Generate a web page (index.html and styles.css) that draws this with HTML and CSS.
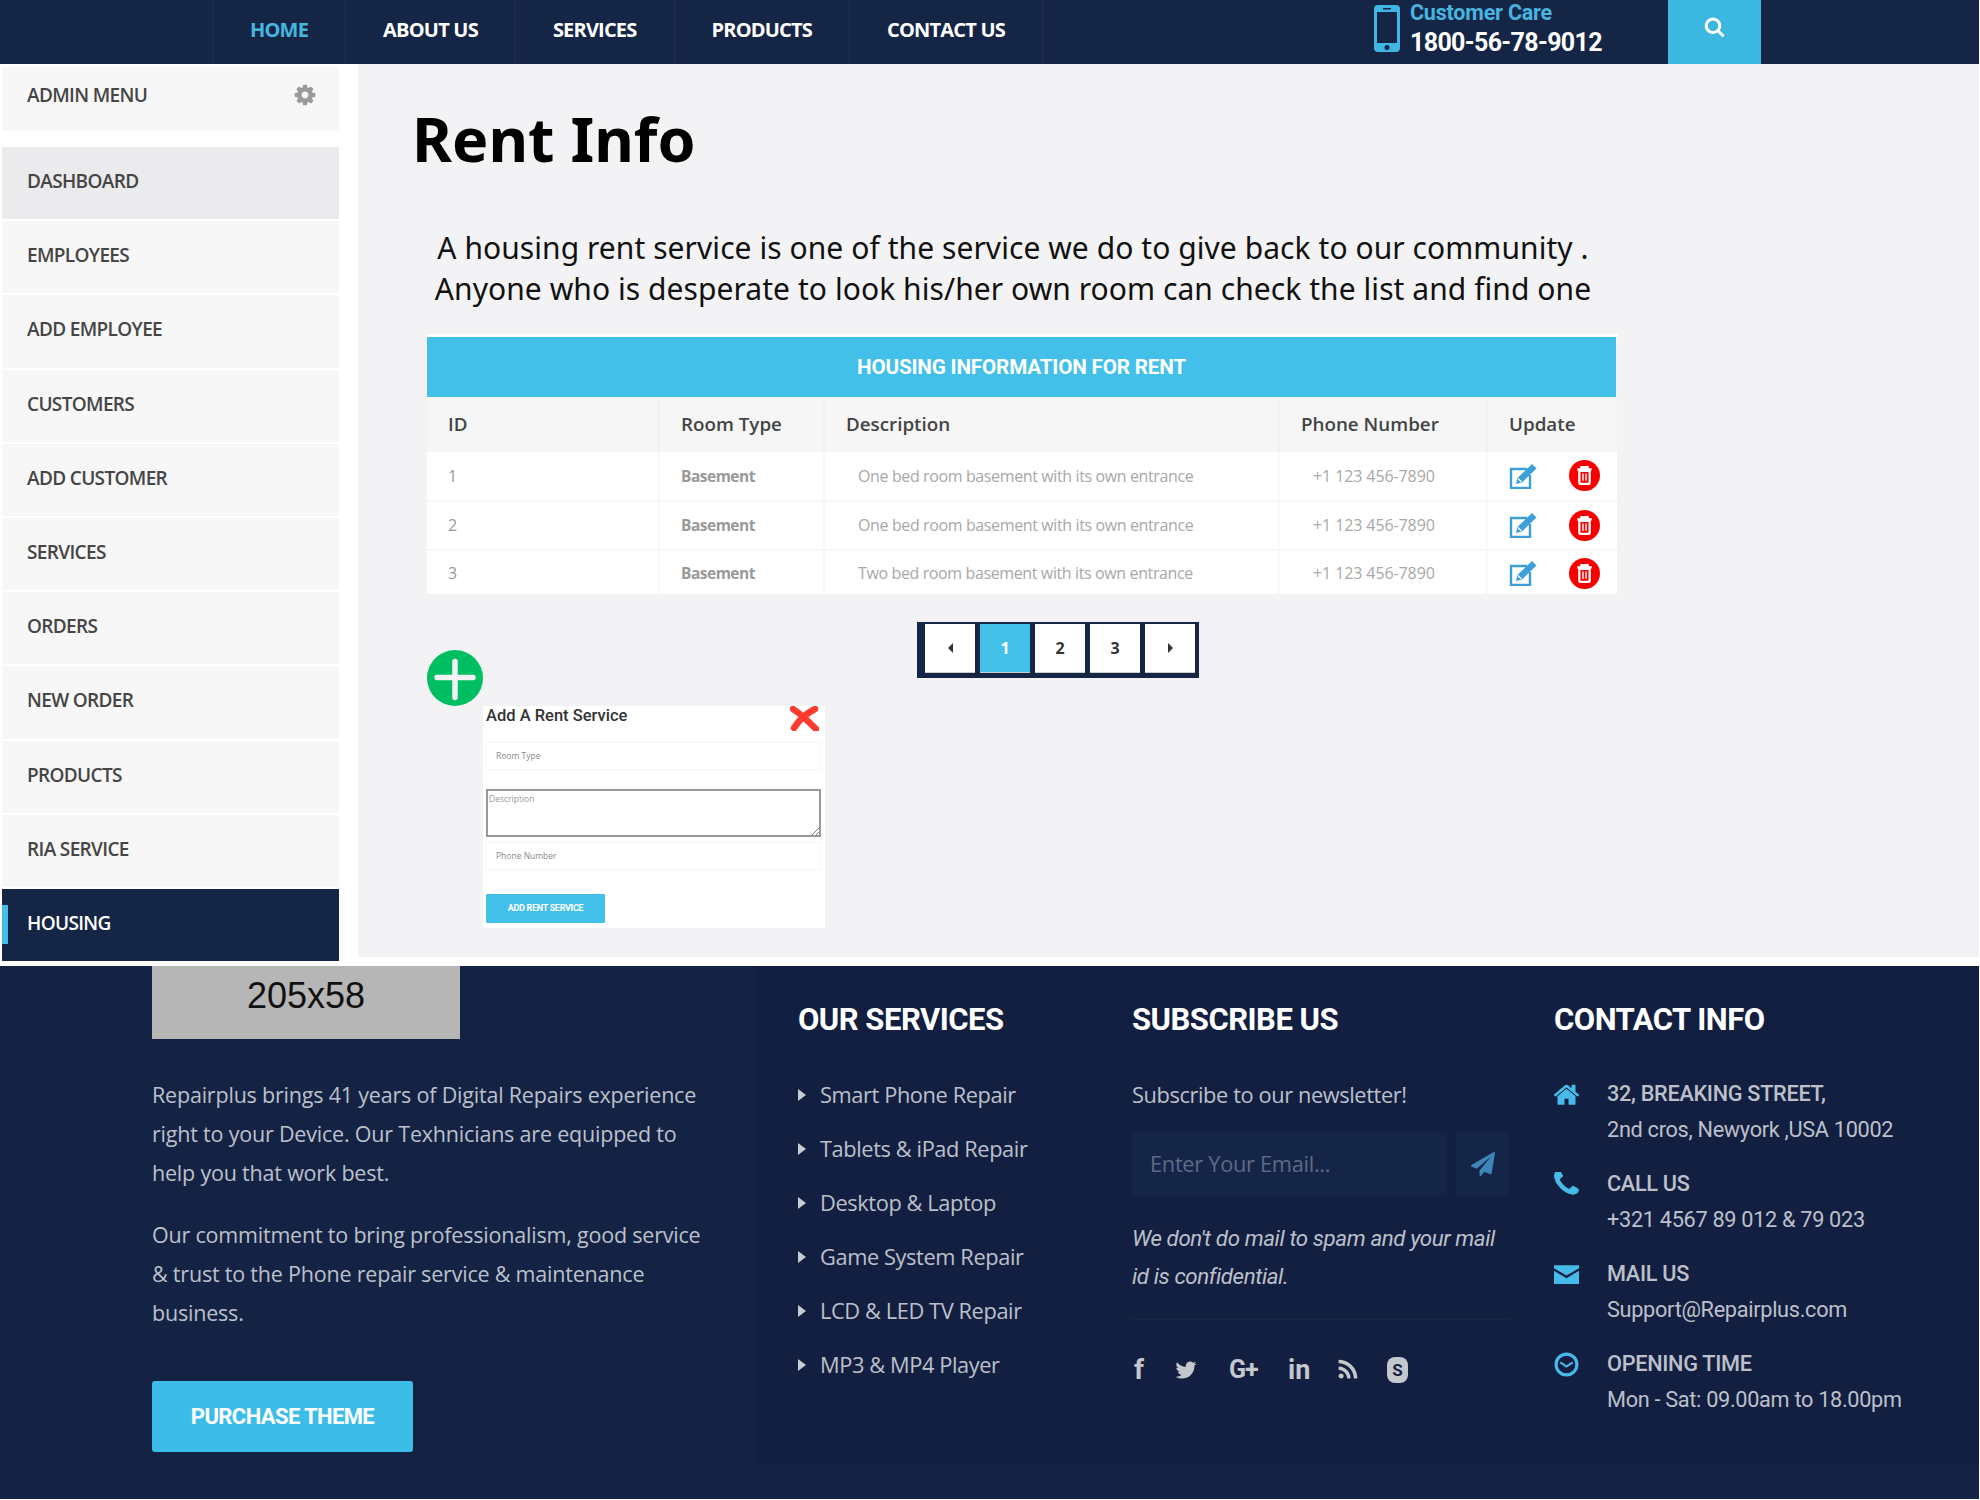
FILE: index.html
```html
<!DOCTYPE html>
<html lang="en">
<head>
<meta charset="utf-8">
<title>Rent Info</title>
<link rel="stylesheet" href="styles.css">
</head>
<body>
<svg class="defs" width="0" height="0" aria-hidden="true">
  <symbol id="edit" viewBox="0 0 28 26">
    <path d="M18 6H2v19h19V12" fill="none" stroke="currentColor" stroke-width="2.400"/>
    <path d="M7 21l1.500-6L23 1l4.500 4.500L13 19.500z" fill="currentColor"/>
    <path d="M9 15.500l3.500 3.500" stroke="#fff" stroke-width="1.200"/>
  </symbol>
  <symbol id="trash" viewBox="0 0 30 30">
    <circle cx="15" cy="15" r="15" fill="#f80000"/>
    <path d="M8 9h14M12 9V7h6v2" fill="none" stroke="#fff" stroke-width="2.200"/>
    <path d="M10 10.500h10V22a1 1 0 0 1-1 1h-8a1 1 0 0 1-1-1z" fill="none" stroke="#fff" stroke-width="2.200"/>
    <path d="M13.500 13v7M16.500 13v7" stroke="#fff" stroke-width="1.400"/>
  </symbol>
</svg>

<header class="topbar">
  <nav class="nav">
    <a class="nav-link is-current">HOME</a>
    <a class="nav-link">ABOUT US</a>
    <a class="nav-link">SERVICES</a>
    <a class="nav-link">PRODUCTS</a>
    <a class="nav-link">CONTACT US</a>
  </nav>
  <div class="care">
    <svg class="care-icon" viewBox="0 0 26 47"><path fill-rule="evenodd" d="M4 0h18a4 4 0 0 1 4 4v39a4 4 0 0 1-4 4H4a4 4 0 0 1-4-4V4a4 4 0 0 1 4-4zM3 7v31h20V7zM9 3v1.500h8V3zM13 40a2.500 2.500 0 1 0 0 5 2.500 2.500 0 0 0 0-5z" fill="#3fb6e4"/></svg>
    <div class="care-text">
      <div class="care-label">Customer Care</div>
      <div class="care-number">1800-56-78-9012</div>
    </div>
  </div>
  <div class="search-box">
    <svg class="search-icon" viewBox="0 0 1792 1792"><path fill="#fff" d="M1216 832q0-185-131.500-316.500t-316.500-131.500-316.500 131.500-131.500 316.500 131.500 316.500 316.500 131.500 316.500-131.500 131.500-316.500zm512 832q0 52-38 90t-90 38q-54 0-90-38l-343-342q-179 124-399 124-143 0-273.500-55.500t-225-150-150-225-55.500-273.500 55.500-273.500 150-225 225-150 273.500-55.500 273.500 55.500 225 150 150 225 55.500 273.500q0 220-124 399l343 343q37 37 37 90z"/></svg>
  </div>
</header>

<div class="middle">
  <aside class="sidebar">
    <div class="admin-head">
      <span>ADMIN MENU</span>
      <svg class="gear" viewBox="0 0 1792 1792"><path fill="#9a9a9a" d="M1152 896q0-106-75-181t-181-75-181 75-75 181 75 181 181 75 181-75 75-181zm512-109v222q0 12-8 23t-20 13l-185 28q-19 54-39 91 35 50 107 138 10 12 10 25t-9 23q-27 37-99 108t-94 71q-12 0-26-9l-138-108q-44 23-91 38-16 136-29 186-7 28-36 28h-222q-14 0-24.500-8.500t-11.500-21.500l-28-184q-49-16-90-37l-141 107q-10 9-25 9-14 0-25-11-126-114-165-168-7-10-7-23 0-12 8-23 15-21 51-66.500t54-70.500q-27-50-41-99l-183-27q-13-2-21-12.500t-8-23.500v-222q0-12 8-23t19-13l186-28q14-46 39-92-40-57-107-138-10-12-10-24 0-10 9-23 26-36 98.500-107.500t94.500-71.500q13 0 26 10l138 107q44-23 91-38 16-136 29-186 7-28 36-28h222q14 0 24.500 8.500t11.500 21.500l28 184q49 16 90 37l142-107q9-9 24-9 13 0 25 10 129 119 165 170 7 8 7 22 0 12-8 23-15 21-51 66.500t-54 70.500q26 50 41 98l183 28q13 2 21 12.500t8 23.500z"/></svg>
    </div>
    <ul class="side-menu">
      <li class="side-item is-hover">DASHBOARD</li>
      <li class="side-item">EMPLOYEES</li>
      <li class="side-item">ADD EMPLOYEE</li>
      <li class="side-item">CUSTOMERS</li>
      <li class="side-item">ADD CUSTOMER</li>
      <li class="side-item">SERVICES</li>
      <li class="side-item">ORDERS</li>
      <li class="side-item">NEW ORDER</li>
      <li class="side-item">PRODUCTS</li>
      <li class="side-item">RIA SERVICE</li>
      <li class="side-item is-active">HOUSING</li>
    </ul>
  </aside>

  <main class="main">
    <h1 class="title">Rent Info</h1>
    <p class="intro">A housing rent service is one of the service we do to give back to our community .<br>Anyone who is desperate to look his/her own room can check the list and find one</p>

    <table class="rent-table">
      <colgroup>
        <col class="c-id"><col class="c-type"><col class="c-desc"><col class="c-phone"><col class="c-act">
      </colgroup>
      <thead>
        <tr class="band"><th colspan="5">HOUSING INFORMATION FOR RENT</th></tr>
        <tr class="heads"><th>ID</th><th>Room Type</th><th>Description</th><th>Phone Number</th><th>Update</th></tr>
      </thead>
      <tbody>
        <tr class="row">
          <td class="t-id">1</td><td class="t-type">Basement</td><td class="t-desc">One bed room basement with its own entrance</td><td class="t-phone">+1 123 456-7890</td>
          <td class="t-act"><div class="acts"><svg class="ic-edit"><use href="#edit"/></svg><svg class="ic-trash"><use href="#trash"/></svg></div></td>
        </tr>
        <tr class="row">
          <td class="t-id">2</td><td class="t-type">Basement</td><td class="t-desc">One bed room basement with its own entrance</td><td class="t-phone">+1 123 456-7890</td>
          <td class="t-act"><div class="acts"><svg class="ic-edit"><use href="#edit"/></svg><svg class="ic-trash"><use href="#trash"/></svg></div></td>
        </tr>
        <tr class="row row-last">
          <td class="t-id">3</td><td class="t-type">Basement</td><td class="t-desc">Two bed room basement with its own entrance</td><td class="t-phone">+1 123 456-7890</td>
          <td class="t-act"><div class="acts"><svg class="ic-edit"><use href="#edit"/></svg><svg class="ic-trash"><use href="#trash"/></svg></div></td>
        </tr>
      </tbody>
    </table>

    <section class="below">
      <div class="add-btn">
        <svg viewBox="0 0 56 56"><circle cx="28" cy="28" r="28" fill="#00bf63"/><path d="M28 12v36M10 28h36" transform="translate(0 -0.500)" stroke="#f3f3f5" stroke-width="5.500" stroke-linecap="round"/></svg>
      </div>
      <div class="pager">
        <span class="page-btn"><i class="arr arr-l"></i></span>
        <span class="page-btn is-on">1</span>
        <span class="page-btn">2</span>
        <span class="page-btn">3</span>
        <span class="page-btn"><i class="arr arr-r"></i></span>
      </div>
      <form class="add-form">
        <div class="form-head">
          <span class="form-title">Add A Rent Service</span>
          <svg class="form-x" viewBox="0 0 29 25"><path d="M3 3c8 5 15 12 23 20M25 3C17 7 9 14 4 22" fill="none" stroke="#ff3b30" stroke-width="6.500" stroke-linecap="round"/></svg>
        </div>
        <div class="fake-input">Room Type</div>
        <div class="fake-area">Description
          <svg class="grip" viewBox="0 0 8 8"><path d="M1 8l7-7M5 8l3-3" stroke="#777" stroke-width="1"/></svg>
        </div>
        <div class="fake-input fake-input-b">Phone Number</div>
        <div class="form-btn">ADD RENT SERVICE</div>
      </form>
    </section>
  </main>
</div>

<footer class="footer">
  <div class="foot-left">
    <div class="logo-ph">205x58</div>
    <p class="foot-p">Repairplus brings 41 years of Digital Repairs experience right to your Device. Our Texhnicians are equipped to help you that work best.</p>
    <p class="foot-p foot-p-2">Our commitment to bring professionalism, good service &amp; trust to the Phone repair service &amp; maintenance business.</p>
    <a class="buy">PURCHASE THEME</a>
  </div>
  <div class="foot-right">
    <div class="col-services">
      <h3 class="foot-h">OUR SERVICES</h3>
      <ul class="svc-list">
        <li>Smart Phone Repair</li>
        <li>Tablets &amp; iPad Repair</li>
        <li>Desktop &amp; Laptop</li>
        <li>Game System Repair</li>
        <li>LCD &amp; LED TV Repair</li>
        <li>MP3 &amp; MP4 Player</li>
      </ul>
    </div>
    <div class="col-sub">
      <h3 class="foot-h">SUBSCRIBE US</h3>
      <p class="sub-line">Subscribe to our newsletter!</p>
      <div class="sub-form">
        <div class="sub-input">Enter Your Email...</div>
        <div class="sub-send"><svg viewBox="0 0 1792 1792"><path fill="#3f86b8" d="M1764 11q33 24 27 64l-256 1536q-5 29-32 45-14 8-31 8-11 0-24-5l-453-185-242 295q-18 23-49 23-13 0-22-4-19-7-30.500-23.500t-11.500-36.500v-349l864-1059-1069 925-395-162q-37-14-40-55-2-40 32-59l1664-960q15-9 32-9 20 0 36 11z"/></svg></div>
      </div>
      <p class="sub-note">We don't do mail to spam and your mail<br>id is confidential.</p>
      <div class="social">
        <span class="so so-f">f</span>
        <svg class="so-svg so-tw" viewBox="0 0 1792 1792"><path fill="#c4c7ce" d="M1684 408q-67 98-162 167 1 14 1 42 0 130-38 259.500t-115.500 248.500-184.500 210.500-258 146-323 54.500q-271 0-496-145 35 4 78 4 225 0 401-138-105-2-188-64.500t-114-159.500q33 5 61 5 43 0 85-11-112-23-185.500-111.500t-73.500-205.500v-4q68 38 146 41-66-44-105-115t-39-154q0-88 44-163 121 149 294.500 238.500t371.500 99.500q-8-38-8-74 0-134 94.500-228.500t228.500-94.500q140 0 236 102 109-21 200-76-35 110-132 170 87-10 174-47z"/></svg>
        <span class="so so-g">G+</span>
        <span class="so so-in">in</span>
        <svg class="so-svg so-rss" viewBox="0 0 1792 1792"><path fill="#c4c7ce" d="M576 1344q0 80-56 136t-136 56-136-56-56-136 56-136 136-56 136 56 56 136zm512 123q2 28-17 48-18 21-47 21h-135q-25 0-43-16.500t-20-41.500q-22-229-184.500-391.500t-391.500-184.500q-25-2-41.500-20t-16.500-43v-135q0-29 21-47 17-17 43-17h5q160 13 306 80.500t259 181.500q114 113 181.500 259t80.500 306zm512 2q2 27-18 47-18 20-46 20h-143q-26 0-44.500-17.500t-19.500-42.500q-12-215-101-408.500t-231.500-336-336-231.500-408.500-102q-25-1-42.500-19.500t-17.500-43.500v-143q0-28 20-46 18-18 44-18h3q262 13 501.500 120t425.500 294q187 186 294 425.500t120 501.500z"/></svg>
        <span class="so-sk">S</span>
      </div>
    </div>
    <div class="col-contact">
      <h3 class="foot-h">CONTACT INFO</h3>
      <div class="c-item">
        <svg class="c-ic" viewBox="96 200 1600 1360"><path fill="#46bbe9" d="M1472 992v480q0 26-19 45t-45 19h-384v-384h-256v384h-384q-26 0-45-19t-19-45v-480q0-1 .5-3t.5-3l575-474 575 474q1 2 1 6zm223-69l-62 74q-8 9-21 11h-3q-13 0-21-7l-692-577-692 577q-12 8-24 7-13-2-21-11l-62-74q-8-10-7-23.500t11-21.500l719-599q32-26 76-26t76 26l244 204v-195q0-14 9-23t23-9h192q14 0 23 9t9 23v408l219 182q10 8 11 21.500t-7 23.500z"/></svg>
        <div><b>32, BREAKING STREET,</b><span>2nd cros, Newyork ,USA 10002</span></div>
      </div>
      <div class="c-item">
        <svg class="c-ic" viewBox="190 250 1420 1420"><path fill="#46bbe9" d="M1600 1240q0 27-10 70.500t-21 68.500q-21 50-122 106-94 51-186 51-27 0-53-3.500t-57.500-12.500-47-14.500-55.500-20.500-49-18q-98-35-175-83-127-79-264-216t-216-264q-48-77-83-175-3-9-18-49t-20.500-55.500-14.500-47-12.500-57.500-3.500-53q0-92 51-186 56-101 106-122 25-11 68.500-21t70.500-10q14 0 21 3 18 6 53 76 11 19 30 54t35 63.500 31 53.500q3 4 17.500 25t21.500 35.500 7 28.500q0 20-28.500 50t-62 55-62 53-28.500 46q0 9 5 22.500t8.500 20.500 14 24 11.500 19q76 137 174 235t235 174q2 1 19 11.500t24 14 20.500 8.500 22.500 5q18 0 46-28.500t53-62 55-62 50-28.500q14 0 28.500 7t35.500 21.500 25 17.500q25 15 53.500 31t63.500 35 54 30q70 35 76 53 3 7 3 21z"/></svg>
        <div><b>CALL US</b><span>+321 4567 89 012 &amp; 79 023</span></div>
      </div>
      <div class="c-item">
        <svg class="c-ic" viewBox="0 0 24 24"><path fill="#46bbe9" d="M0 3h24v3L12 13 0 6zM0 8.500l12 7 12-7V21H0z"/></svg>
        <div><b>MAIL US</b><span>Support@Repairplus.com</span></div>
      </div>
      <div class="c-item">
        <svg class="c-ic" viewBox="0 0 24 24"><circle cx="12" cy="12" r="10" fill="none" stroke="#46bbe9" stroke-width="3"/><path d="M6 10l6 4 6-4" fill="none" stroke="#46bbe9" stroke-width="2"/></svg>
        <div><b>OPENING TIME</b><span>Mon - Sat: 09.00am to 18.00pm</span></div>
      </div>
    </div>
  </div>
</footer>
</body>
</html>
```
FILE: styles.css
```css
* { box-sizing: border-box; }
html, body { margin: 0; padding: 0; background: #fff; }
body { width: 1980px; font-family: "Open Sans", sans-serif; }
.defs { position: absolute; }
ul { list-style: none; margin: 0; padding: 0; }

/* top bar */
.topbar { display: flex; height: 64px; background: #152545; padding-left: 212px; margin-right: 1px; }
.nav { display: flex; flex: none; width: 830px; height: 64px; }
.nav-link { display: flex; flex: none; white-space: nowrap; align-items: center; justify-content: center; height: 64px; padding: 0 37px 6px; border-left: 1px solid #202f50; font-size: 20px; font-weight: 700; color: #fff; letter-spacing: -0.8px; }
.nav-link:last-child { border-right: 1px solid #202f50; }
.nav-link.is-current { color: #46b6e0; }
.care { display: flex; margin-left: 332px; width: 294px; padding-top: 5px; }
.care-icon { width: 26px; height: 47px; margin-right: 10px; }
.care-text { font-family: Roboto, sans-serif; font-weight: 700; margin-top: -5px; }
.care-label { font-size: 21.500px; line-height: 26px; color: #46b6e0; letter-spacing: -0.2px; }
.care-number { font-size: 25px; line-height: 34px; color: #fff; letter-spacing: -0.650px; }
.search-box { width: 93px; height: 64px; background: #3cb8e0; display: flex; justify-content: center; padding-top: 16px; }
.search-icon { width: 21px; height: 21px; }

/* middle */
.middle { display: flex; height: 902px; margin-right: 1px; }
.sidebar { width: 358px; padding: 3px 19px 0 2px; font-weight: 600; font-size: 19px; letter-spacing: -0.650px; color: #454545; }
.admin-head { display: flex; justify-content: space-between; align-items: center; height: 64px; background: #f7f7f7; padding: 0 22px 8px 25px; margin-bottom: 16px; }
.gear { width: 24px; height: 24px; }
.side-menu { display: flex; flex-direction: column; gap: 2px; }
.side-item { height: 72.200px; display: flex; align-items: center; padding: 0 0 4px 25px; background: #f7f7f7; }
.side-item.is-hover { background: #ebebed; }
.side-item.is-active { position: relative; background: #152545; color: #fff; }
.side-item.is-active::before { content: ""; position: absolute; left: 0; top: 16px; width: 6px; height: 39px; background: #45bde8; }

.main { flex: 1; height: 893px; background: #f3f3f5; padding-left: 54px; }
.title { margin: 0; padding-top: 39px; font-family: "Noto Sans", sans-serif; font-size: 61px; line-height: 72px; font-weight: 700; color: #000; }
.intro { width: 1172px; margin: 52px 0 0 15px; text-align: center; font-family: "Noto Sans", sans-serif; font-size: 30px; line-height: 41px; letter-spacing: 0.060px; color: #111; }

/* table */
.rent-table { width: 1190px; margin: 25px 0 0 15px; table-layout: fixed; border-collapse: collapse; border-top: 3px solid #fff; font-size: 16px; }
.c-id { width: 232px; } .c-type { width: 165px; } .c-desc { width: 455px; } .c-phone { width: 208px; } .c-act { width: 130px; }
.band th { height: 61px; background: #42c0ea; color: #fff; font-family: Roboto, sans-serif; font-size: 20.700px; font-weight: 700; letter-spacing: -0.2px; padding: 0; border-right: 2px solid #f3f3f5; }
.heads th { height: 55px; background: #f6f6f7; text-align: left; font-size: 18.800px; font-weight: 600; color: #444; padding: 0 0 0 21px; border-right: 2px solid #f1f1f3; }
.heads th:last-child { border-right: 0; }
.row td { height: 49px; background: #fff; padding: 0 0 0 21px; color: #999; border-right: 2px solid #f8f8f8; border-bottom: 2px solid #f8f8f8; }
.row-last td { height: 44px; padding-top: 2px; border-bottom: 0; }
.row td:last-child { border-right: 0; }
.row .t-type { font-weight: 700; font-size: 15.500px; letter-spacing: -0.5px; color: #999; }
.row .t-desc { padding-left: 33px; color: #a8a8a8; letter-spacing: -0.380px; }
.row .t-phone { padding-left: 33px; color: #a8a8a8; letter-spacing: -0.1px; }
.acts { display: flex; align-items: center; gap: 32px; }
.ic-edit { width: 28px; height: 26px; color: #3d9fd8; }
.ic-trash { width: 31px; height: 31px; }

/* below table */
.below { display: grid; grid-template-columns: 56px 342px auto; grid-template-rows: 84px auto; margin: 28px 0 0 15px; }
.add-btn { grid-column: 1; grid-row: 1; align-self: end; height: 56px; }
.add-btn svg { display: block; width: 56px; height: 56px; }
.pager { grid-column: 3; grid-row: 1; justify-self: start; margin-left: 92px; display: flex; gap: 5px; height: 56px; padding: 2px 4px 5px 8px; background: #152545; }
.page-btn { width: 50px; height: 49px; background: #fff; border-bottom: 1px solid #ccc; display: flex; align-items: center; justify-content: center; font-size: 16px; font-weight: 700; color: #333; }
.page-btn.is-on { background: #42c0ea; color: #fff; }
.arr { display: block; width: 0; height: 0; border-top: 5px solid transparent; border-bottom: 5px solid transparent; }
.arr-l { border-right: 5px solid #333; }
.arr-r { border-left: 5px solid #333; }
.add-form { grid-column: 2; grid-row: 2; height: 222px; background: #fff; padding: 0 4px 0 3px; font-family: Roboto, sans-serif; }
.form-head { display: flex; justify-content: space-between; height: 36px; }
.form-title { font-size: 16.500px; line-height: 20px; font-weight: 500; color: #333; }
.form-x { width: 29px; height: 25px; margin-right: 2px; }
.fake-input { height: 28px; border: 1px solid #f6f6f6; padding-left: 9px; font-size: 8.500px; line-height: 26px; color: #888; font-family: "Open Sans", sans-serif; }
.fake-area { position: relative; height: 48px; margin-top: 19px; border: 2px solid #999; padding-left: 1px; font-size: 8.500px; line-height: 15px; color: #999; font-family: "Open Sans", sans-serif; }
.grip { position: absolute; right: 0; bottom: 0; width: 8px; height: 8px; }
.fake-input-b { margin-top: 5px; }
.form-btn { width: 119px; height: 29px; margin-top: 24px; background: #42c0ea; border-radius: 1px; color: #fff; font-size: 9px; font-weight: 700; letter-spacing: -0.3px; text-align: center; line-height: 28px; }

/* footer */
.footer { display: flex; height: 533px; background: #142344; margin-right: 1px; color: #bcc0ca; }
.foot-left { width: 755px; padding-left: 152px; }
.logo-ph { width: 308px; height: 73px; background: #b6b6b6; color: #111; font-family: "Liberation Sans", sans-serif; font-size: 36px; line-height: 60px; text-align: center; }
.foot-p { width: 550px; margin: 36px 0 0; font-size: 21.500px; line-height: 39px; letter-spacing: -0.2px; }
.foot-p-2 { margin-top: 23px; }
.buy { display: block; width: 261px; height: 71px; margin-top: 49px; background: #3cbde8; border-radius: 3px; color: #fff; font-family: Roboto, sans-serif; font-size: 22px; font-weight: 700; letter-spacing: -0.6px; line-height: 71px; text-align: center; }

.foot-right { display: flex; flex: 1; height: 499px; background: #131f40; padding: 34px 0 0 43px; }
.foot-h { margin: 0; font-family: Roboto, sans-serif; font-size: 31px; line-height: 40px; font-weight: 700; color: #fff; letter-spacing: -0.5px; }
.col-services { width: 334px; }
.svc-list { margin-top: 28px; }
.svc-list li { position: relative; height: 54px; line-height: 54px; padding-left: 22px; font-size: 21.800px; letter-spacing: -0.4px; }
.svc-list li::before { content: ""; position: absolute; left: 0; top: 21px; border-top: 6px solid transparent; border-bottom: 6px solid transparent; border-left: 8px solid #c8ccd4; }
.col-sub { width: 422px; padding-right: 45px; }
.sub-line { margin: 28px 0 0; font-size: 21.800px; line-height: 54px; letter-spacing: -0.4px; }
.sub-form { display: flex; gap: 9px; margin-top: 10px; }
.sub-input { width: 315px; height: 64px; background: #152548; padding-left: 18px; line-height: 64px; font-size: 21.800px; letter-spacing: -0.3px; color: #5d6a85; }
.sub-send { width: 53px; height: 64px; background: #152548; display: flex; align-items: center; justify-content: center; }
.sub-send svg { width: 24px; height: 24px; }
.sub-note { margin: 23px 0 0; font-family: Roboto, sans-serif; font-style: italic; font-size: 22.300px; line-height: 38px; letter-spacing: -0.4px; padding-bottom: 24px; border-bottom: 1px solid #1a2747; }
.social { display: flex; align-items: center; height: 30px; margin-top: 35px; color: #c4c7ce; }
.so { font-family: Roboto, sans-serif; font-weight: 700; line-height: 30px; }
.so-f { font-size: 28px; width: 42px; padding-left: 2px; }
.so-tw { width: 24px; height: 24px; margin-right: 31px; }
.so-g { font-size: 25px; width: 59px; letter-spacing: -1px; }
.so-in { font-size: 27px; width: 48px; }
.so-rss { width: 24px; height: 24px; margin-right: 27px; }
.so-sk { width: 21px; height: 26px; border-radius: 8px; background: #c4c7ce; color: #131f40; font-family: Roboto, sans-serif; font-weight: 700; font-size: 17px; line-height: 26px; text-align: center; }
.col-contact { flex: 1; }
.col-contact .foot-h { margin-bottom: 36px; }
.c-item { display: flex; height: 72px; margin-bottom: 18px; font-family: Roboto, sans-serif; font-size: 21.700px; line-height: 36px; letter-spacing: -0.3px; }
.c-item b { display: block; font-weight: 500; }
.c-item span { display: block; }
.c-ic { width: 25px; height: 25px; margin: 6px 28px 0 0; flex: none; }
```
